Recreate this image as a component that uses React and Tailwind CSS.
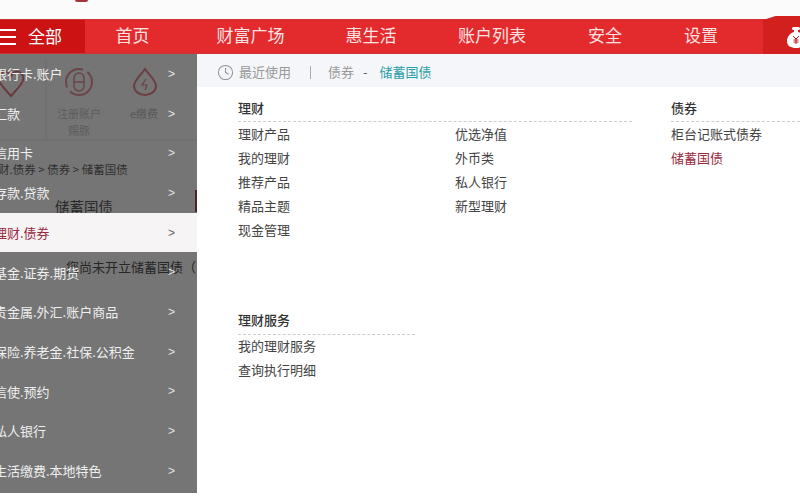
import React from 'react';
import { Clock } from 'lucide-react';

const navItems = [
  { label: '首页', w: 'w-[95px]' },
  { label: '财富广场', w: 'w-[141px]' },
  { label: '惠生活', w: 'w-[100px]' },
  { label: '账户列表', w: 'w-[142px]' },
  { label: '安全', w: 'w-[84px]' },
  { label: '设置', w: 'w-[108px]' },
];

const menuItems = [
  '银行卡.账户',
  '汇款',
  '信用卡',
  '存款.贷款',
  '理财.债券',
  '基金.证券.期货',
  '贵金属.外汇.账户商品',
  '保险.养老金.社保.公积金',
  '信使.预约',
  '私人银行',
  '生活缴费.本地特色',
];

const SectionTitle = ({ children, className = 'h-[26px]' }) => (
  <div className={`leading-[24px] text-[13px] font-medium text-[#333] border-b border-dashed border-[#ccc] ${className}`}>
    {children}
  </div>
);

const LinkList = ({ items, className = '' }) => (
  <ul className={`text-[13px] leading-[24px] text-[#444] ${className}`}>
    {items.map((item) => (
      <li key={item}>{item}</li>
    ))}
  </ul>
);

// faint page that shows through the grey menu overlay
const Ghost = () => (
  <div className="absolute inset-0 overflow-hidden">
    <svg className="absolute left-0 top-0 w-[197px] h-[150px]" viewBox="0 54 197 150" fill="none">
      <path d="M-1 76c3-6 9-6 12 0 3-6 9-6 12 0 2 6-6 13-12 20-6-7-14-14-12-20z" stroke="#6b3a3e" strokeWidth="2" />
      <circle cx="79" cy="82" r="13" stroke="#6b4547" strokeWidth="2" strokeDasharray="30 5" />
      <rect x="74" y="73" width="10" height="18" rx="5" stroke="#6b4547" strokeWidth="1.5" />
      <path d="M74 82h10" stroke="#6b4547" strokeWidth="1.5" />
      <path d="M145 69c-5 7-11 12-11 17a11 9 0 0 0 22 0c0-5-6-10-11-17z" stroke="#6b3f42" strokeWidth="2" />
      <path d="M146 79l-4 6h5l-2 5" stroke="#6b3f42" strokeWidth="1.2" />
      <path d="M46 60v80" stroke="#6c6c6c" />
      <path d="M0 140h197" stroke="#6c6c6c" />
    </svg>
    <span className="absolute left-[57px] top-[51px] text-[11px] text-[#5c5c5c]">注册账户</span>
    <span className="absolute left-[68px] top-[68px] text-[11px] text-[#5c5c5c]">赐豚</span>
    <span className="absolute left-[130px] top-[51px] text-[11px] text-[#585858]">e缴费</span>
    <span className="absolute left-[-2px] top-[107px] text-[11.5px] whitespace-nowrap text-[#2f2f2f]">财.债券 &gt; 债券 &gt; 储蓄国债</span>
    <span className="absolute left-[55px] top-[142px] text-[14.5px] text-[#2a2a2a]">储蓄国债</span>
    <span className="absolute left-[66px] top-[203px] text-[13px] whitespace-nowrap text-[#262626]">您尚未开立储蓄国债（</span>
    <div className="absolute right-0 top-[136px] w-[2px] h-[22px] bg-[#4d2228]" />
  </div>
);

export default function App() {
  return (
    <div className="w-[800px] h-[500px] overflow-hidden bg-white flex flex-col font-['Noto_Sans_CJK_SC','Noto_Sans',sans-serif]">
      {/* logo remnant */}
      <div className="h-[19px] shrink-0 bg-[#fbfbfb] relative">
        <div className="absolute left-[75px] top-0 w-[13px] h-[2px] rounded-b bg-[#a3343a]" />
      </div>

      {/* Red nav */}
      <div className="h-[35px] shrink-0 flex relative bg-[#e32b2e] border-y border-[#cc3337] text-white">
        <div className="w-[85px] flex items-center gap-[12px] bg-[#cc1212]">
          <div className="w-[16px] flex flex-col gap-[5px]">
            <span className="h-[2px] bg-white" />
            <span className="h-[2px] bg-white" />
            <span className="h-[2px] bg-white" />
          </div>
          <span className="text-[17px] leading-none pb-[2px]">全部</span>
        </div>
        {navItems.map((item) => (
          <div key={item.label} className={`${item.w} text-center text-[17px] leading-[29px] text-[#fbe3e3]`}>
            {item.label}
          </div>
        ))}
        <div className="absolute right-0 top-[-4px] bottom-[-1px] w-[37px] bg-[#d2201f] flex items-center [clip-path:polygon(0_4px,34%_0,100%_0,100%_100%,0_100%)]">
          <svg className="ml-[24px] mt-[4px] shrink-0 w-[18px] h-[21px]" viewBox="0 0 18 21">
            <rect x="5" y="0" width="8" height="3" rx="1.5" fill="#fff" />
            <path d="M7 3h4v2c4 1 7 5 7 9 0 5-4 7-9 7s-9-2-9-7c0-4 3-8 7-9z" fill="#fff" />
            <path d="M6 9l3 3 3-3M9 12v5M6.5 13h5M6.5 15h5" stroke="#c4161a" fill="none" />
          </svg>
        </div>
      </div>

      <div className="flex-1 flex min-h-0">
        {/* Left menu */}
        <div className="w-[197px] shrink-0 h-[439px] relative bg-[#757575]">
          <Ghost />
          <ul className="relative flex flex-col">
            {menuItems.map((item) => {
              const active = item === '理财.债券';
              return (
                <li
                  key={item}
                  className={`h-[39.7px] flex items-center justify-between pr-[22px] -ml-[6px] text-[13px] ${active ? 'bg-[#f6f4f5] text-[#9a2a3e]' : 'text-[#efefef]'}`}
                >
                  <span>{item}</span>
                  <span className={`font-['Liberation_Sans',sans-serif] text-[12px] ${active ? 'text-[#666]' : 'text-[#e4e4e4]'}`}>&gt;</span>
                </li>
              );
            })}
          </ul>
        </div>

        {/* Right content */}
        <div className="flex-1 min-w-0">
          <div className="h-[33px] bg-[#f5f6fa] flex items-center pl-[20px] pt-[3px] text-[13px] text-[#999]">
            <Clock className="w-[17px] h-[17px] text-[#8f949c]" strokeWidth={1.5} />
            <span className="ml-[5px]">最近使用</span>
            <span className="ml-[19px] w-[1px] h-[13px] bg-[#aaa]" />
            <span className="ml-[17px]">债券</span>
            <span className="ml-[9px] text-[#666]">-</span>
            <span className="ml-[12px] text-[#2a9fa5]">储蓄国债</span>
          </div>

          <div className="flex pt-[9px] pl-[41px]">
            <div className="w-[394px]">
              <SectionTitle>理财</SectionTitle>
              <div className="flex">
                <LinkList className="w-[217px]" items={['理财产品', '我的理财', '推荐产品', '精品主题', '现金管理']} />
                <LinkList items={['优选净值', '外币类', '私人银行', '新型理财']} />
              </div>
              <div className="w-[177px] mt-[66px]">
                <SectionTitle className="h-[27px]">理财服务</SectionTitle>
                <LinkList className="-mt-[1px]" items={['我的理财服务', '查询执行明细']} />
              </div>
            </div>
            <div className="ml-[39px] flex-1">
              <SectionTitle>债券</SectionTitle>
              <ul className="text-[13px] leading-[24px] text-[#444]">
                <li>柜台记账式债券</li>
                <li className="text-[#9a2a3e]">储蓄国债</li>
              </ul>
            </div>
          </div>
        </div>
      </div>
    </div>
  );
}
